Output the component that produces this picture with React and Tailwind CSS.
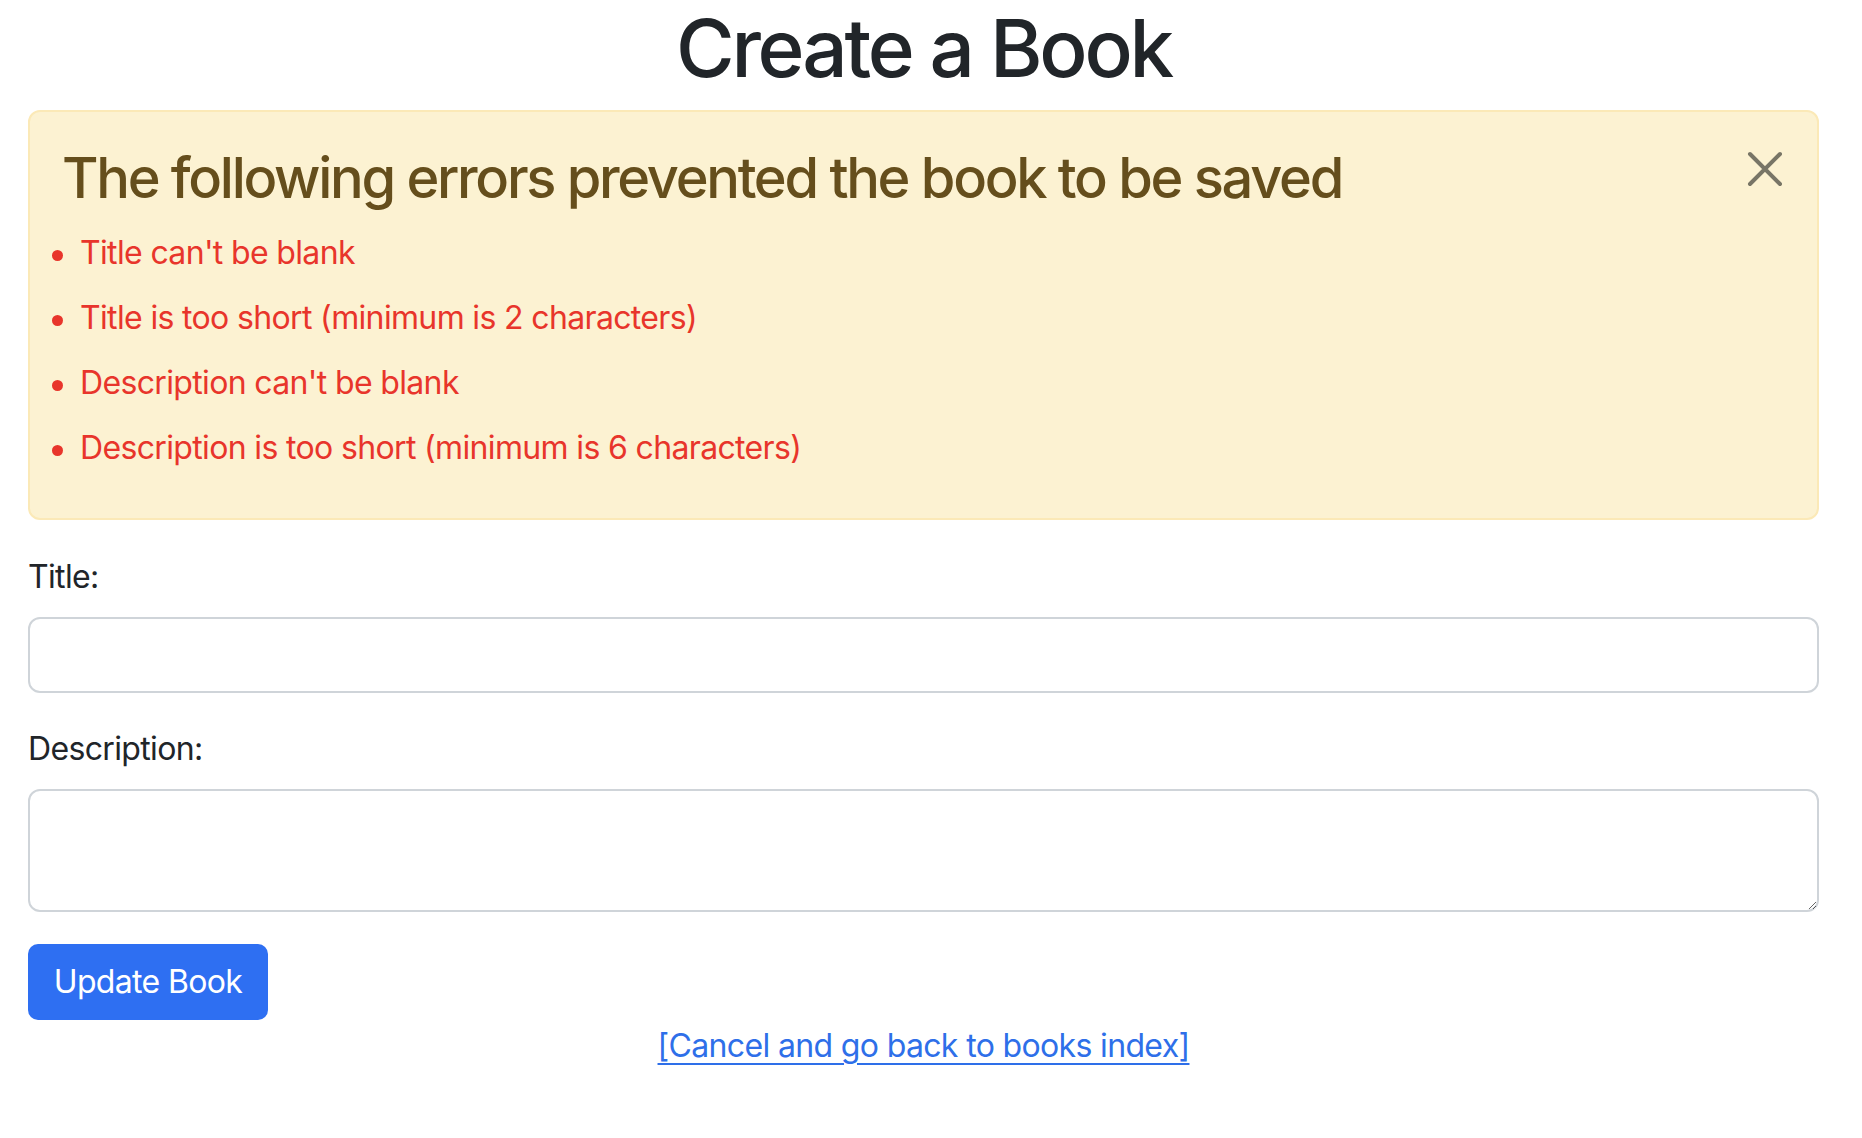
const errors = [
  "Title can't be blank",
  'Title is too short (minimum is 2 characters)',
  "Description can't be blank",
  'Description is too short (minimum is 6 characters)',
];

const App = () => {
  return (
    <div className="min-h-screen bg-white font-['Inter','Noto_Sans',sans-serif] text-[#212529] tracking-[-0.65px]">
      <div className="ml-[28px] w-[1791px]">
        {/* Header */}
        <h1 className="text-center text-[80px] leading-[96px] font-medium tracking-[-3.2px] mb-[14px]">Create a Book</h1>

        {/* Errors */}
        <div className="relative bg-[#fcf2d2] border-2 border-[#fbe9b7] rounded-[12px] px-[32px] pt-[33px] pb-[33px] mb-[33px]">
          <h3 className="text-[56px] leading-[67px] font-medium tracking-[-2.3px] text-[#654e1c] mb-[17px]">
            The following errors prevented the book to be saved
          </h3>
          <button className="absolute top-[37px] right-[32px] p-[2px]">
            <svg width="36" height="36" viewBox="0 0 36 36" fill="none" stroke="#787566" strokeWidth="4" strokeLinecap="round">
              <path d="M3 3L33 33M33 3L3 33" />
            </svg>
          </button>
          <ul className="ml-[-10px] flex flex-col gap-[17px] mb-[13px]">
            {errors.map((error) => (
              <li key={error} className="flex text-[32px] leading-[48px] text-[#e8352b]">
                <span className="mt-[21px] mr-[17px] h-[11px] w-[11px] shrink-0 rounded-full bg-[#e8352b]"></span>
                <span>{error}</span>
              </li>
            ))}
          </ul>
        </div>

        {/* Form */}
        <form className="text-[32px] leading-[48px]">
          <label className="block mb-[16px]">Title:</label>
          <input
            type="text"
            className="block w-full h-[76px] border-2 border-[#cfd4d9] rounded-[12px] px-[24px] outline-none mb-[32px]"
          />
          <label className="block mb-[16px]">Description:</label>
          <textarea className="block w-full h-[123px] border-2 border-[#cfd4d9] rounded-[12px] px-[24px] py-[12px] outline-none mb-[32px]"></textarea>
          <button
            type="button"
            className="w-[240px] h-[76px] bg-[#2e6ff2] text-white rounded-[10px] flex items-center justify-center"
          >
            Update Book
          </button>
        </form>
        <div className="text-center text-[32px] leading-[48px] mt-[2px]">
          <a href="#" className="text-[#2e6fe9] underline underline-offset-[6px] decoration-2">
            [Cancel and go back to books index]
          </a>
        </div>
      </div>
    </div>
  );
};

export default App;
